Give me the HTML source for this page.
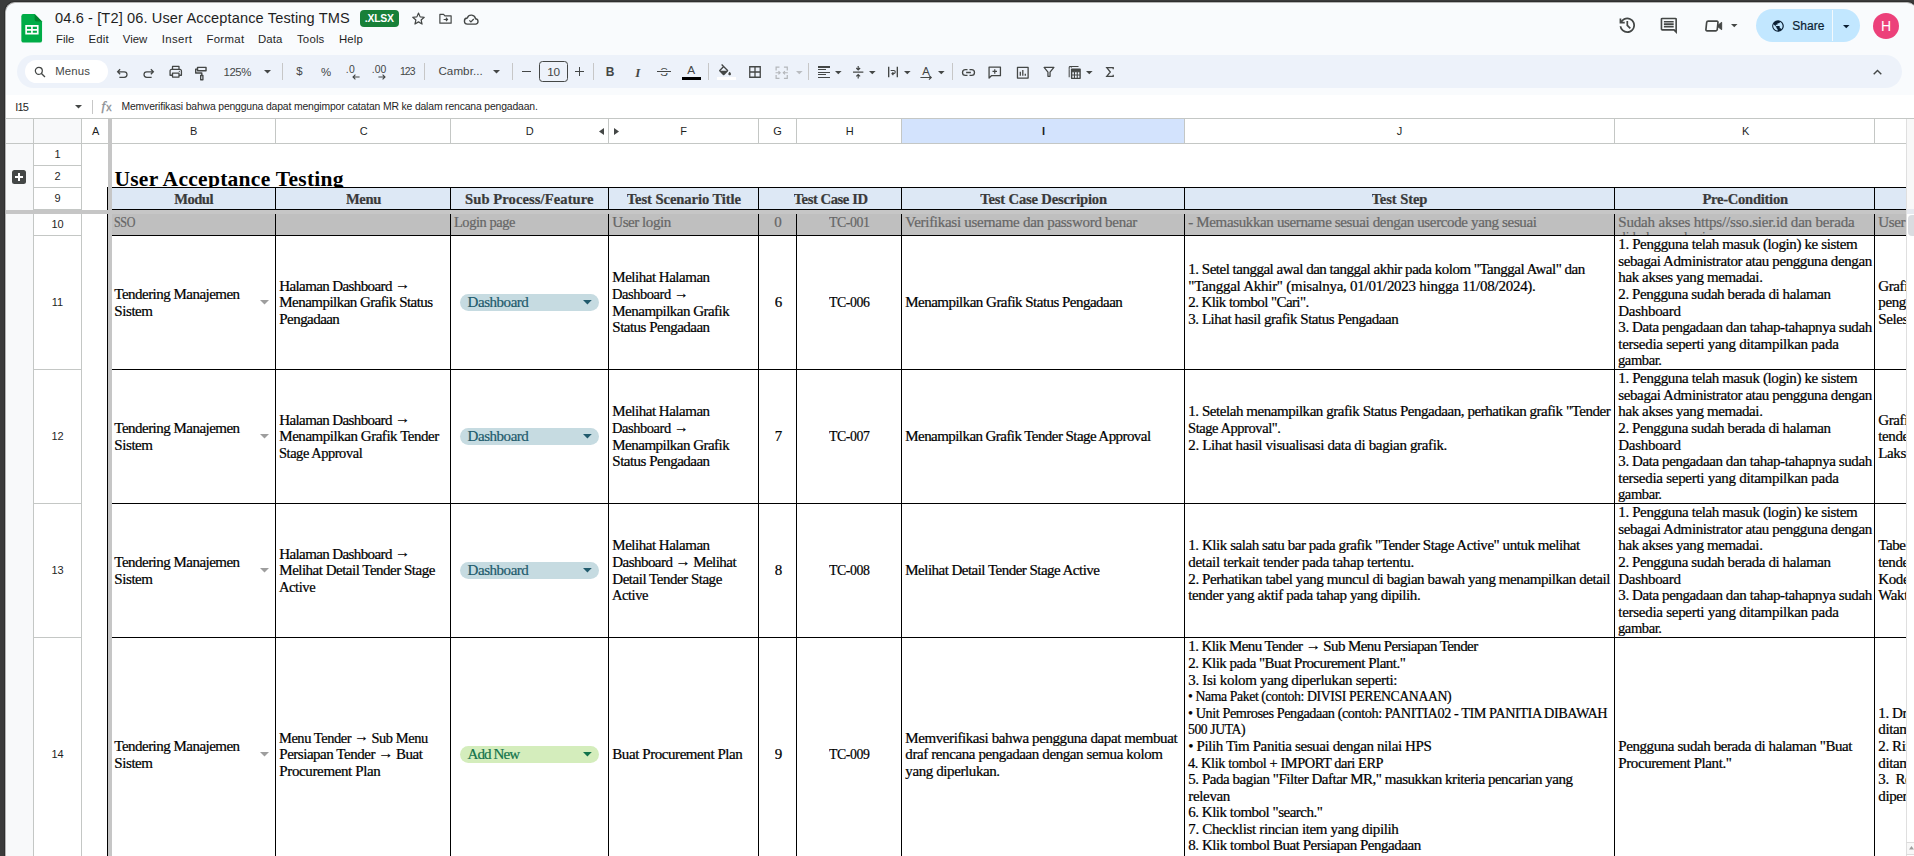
<!DOCTYPE html>
<html><head><meta charset="utf-8"><title>sheet</title>
<style>
*{box-sizing:border-box;margin:0;padding:0}
html,body{width:1914px;height:856px;overflow:hidden;background:#3b3b3b;font-family:"Liberation Sans",sans-serif}
#app{position:absolute;left:5px;top:2px;width:1912px;height:854px;background:#f9fbfd;border-radius:10px 10px 0 0;overflow:hidden;border-left:1px solid #b4b4b4;border-top:1px solid #b4b4b4;box-shadow:0 0 0 1px #2f2f2f}
#pg{position:absolute;left:-6px;top:-3px;width:1914px;height:856px}
.a{position:absolute}
.t{position:absolute;white-space:nowrap}
svg{position:absolute;overflow:visible}
.cell{position:absolute;display:flex;flex-direction:column;justify-content:center;font-family:"Liberation Serif",serif;font-size:15px;line-height:16.6px;color:#000;overflow:hidden;white-space:nowrap;letter-spacing:-0.4px;-webkit-text-stroke:0.22px}
.cell div{white-space:nowrap}
.cell.c{align-items:center}
.ar{position:relative;top:-1.3px}
</style></head><body>
<div id="app"><div id="pg">

<svg style="left:21.3px;top:14.1px" width="21.4" height="28.6" viewBox="0 0 21 29">
 <path d="M2.2 0H13.5L21 7.5V26.8Q21 29 18.8 29H2.2Q0 29 0 26.8V2.2Q0 0 2.2 0Z" fill="#00ac47"/>
 <path d="M13.5 0L21 7.5H15.5Q13.5 7.5 13.5 5.5Z" fill="#00832d"/>
 <path d="M4 11.2H17.5V20.8H4Z M5.7 12.9V15.1H9.9V12.9Z M11.6 12.9V15.1H15.8V12.9Z M5.7 16.9V19.1H9.9V16.9Z M11.6 16.9V19.1H15.8V16.9Z" fill="#fff" fill-rule="evenodd"/>
</svg>
<div class="t" style="left:55.00px;top:8.74px;font:14.6px/19px 'Liberation Sans',sans-serif;color:#1f1f1f;letter-spacing:0.117px;">04.6 - [T2] 06. User Acceptance Testing TMS</div>
<div class="a" style="left:360px;top:10px;width:39px;height:16.8px;background:#188038;border-radius:4px"></div>
<div class="t" style="left:364.70px;top:11.90px;font:bold 10.4px/14px 'Liberation Sans',sans-serif;color:#fff;letter-spacing:-0.171px;">.XLSX</div>
<svg style="left:411.30px;top:10.90px;" width="15" height="15" viewBox="0 0 24 24"><path d="M12 3.3l2.6 6.1 6.6.6-5 4.4 1.5 6.5L12 17.4 6.3 20.9l1.5-6.5-5-4.4 6.6-.6z" fill="none" stroke="#444746" stroke-width="1.9" stroke-linejoin="round"/></svg>
<svg style="left:437.50px;top:11.30px;" width="15" height="15" viewBox="0 0 24 24"><path d="M3 5.5h6l2 2.2h10v11.8H3z" fill="none" stroke="#444746" stroke-width="1.9" stroke-linejoin="round"/><path d="M9 13.5h6M12.6 10.8l2.7 2.7-2.7 2.7" fill="none" stroke="#444746" stroke-width="1.8"/></svg>
<svg style="left:462.90px;top:10.50px;" width="17" height="17" viewBox="0 0 24 24"><path d="M6.5 18.5a4.3 4.3 0 0 1-.4-8.6 6 6 0 0 1 11.6 1.1 3.8 3.8 0 0 1 .5 7.5z" fill="none" stroke="#444746" stroke-width="1.9" stroke-linejoin="round"/><path d="M9 13.2l2.2 2.2 4-4" fill="none" stroke="#444746" stroke-width="1.8"/></svg>
<div class="t" style="left:56.00px;top:32.05px;font:11.4px/15px 'Liberation Sans',sans-serif;color:#1f1f1f;letter-spacing:-0.018px;">File</div>
<div class="t" style="left:88.50px;top:32.05px;font:11.4px/15px 'Liberation Sans',sans-serif;color:#1f1f1f;letter-spacing:0.214px;">Edit</div>
<div class="t" style="left:122.80px;top:32.05px;font:11.4px/15px 'Liberation Sans',sans-serif;color:#1f1f1f;letter-spacing:-0.001px;">View</div>
<div class="t" style="left:161.80px;top:32.05px;font:11.4px/15px 'Liberation Sans',sans-serif;color:#1f1f1f;letter-spacing:0.331px;">Insert</div>
<div class="t" style="left:206.40px;top:32.05px;font:11.4px/15px 'Liberation Sans',sans-serif;color:#1f1f1f;letter-spacing:0.316px;">Format</div>
<div class="t" style="left:258.00px;top:32.05px;font:11.4px/15px 'Liberation Sans',sans-serif;color:#1f1f1f;letter-spacing:0.105px;">Data</div>
<div class="t" style="left:297.00px;top:32.05px;font:11.4px/15px 'Liberation Sans',sans-serif;color:#1f1f1f;letter-spacing:0.177px;">Tools</div>
<div class="t" style="left:339.00px;top:32.05px;font:11.4px/15px 'Liberation Sans',sans-serif;color:#1f1f1f;letter-spacing:0.138px;">Help</div>
<svg style="left:1616.60px;top:15.30px;" width="20.6" height="20.6" viewBox="0 -960 960 960"><path d="M480-120q-138 0-240.500-91.500T122-440h82q14 104 92.500 172T480-200q117 0 198.500-81.500T760-480q0-117-81.500-198.500T480-760q-69 0-129 32t-101 88h110v80H120v-240h80v94q51-64 124.500-99T480-840q75 0 140.500 28.500t114 77q48.500 48.500 77 114T840-480q0 75-28.500 140.500t-77 114q-48.500 48.500-114 77T480-120Zm112-192L440-464v-216h80v184l128 128-56 56Z" fill="#444746"/></svg>
<svg style="left:1658.80px;top:16.00px;" width="19.6" height="19.6" viewBox="0 -960 960 960"><path d="M240-400h480v-80H240v80Zm0-120h480v-80H240v80Zm0-120h480v-80H240v80ZM880-80 720-240H160q-33 0-56.500-23.500T80-320v-480q0-33 23.500-56.500T160-880h640q33 0 56.500 23.500T880-800v720ZM160-320h594l46 45v-525H160v480Zm0 0v-480 480Z" fill="#444746"/></svg>
<svg style="left:1704.40px;top:16.20px;" width="20" height="20" viewBox="0 0 24 24"><path d="M4.2 6.2h10.4a1.6 1.6 0 0 1 1.6 1.6v8.4a1.6 1.6 0 0 1-1.6 1.6H4.2a1.6 1.6 0 0 1-1.6-1.6V7.8a1.6 1.6 0 0 1 1.6-1.6z" fill="none" stroke="#444746" stroke-width="2" transform="skewX(-6) translate(1.4 0)"/><path d="M16.6 11.2l4.6-3.6v8.8l-4.6-3.6z" fill="#444746" stroke="#444746" stroke-width="1.2" stroke-linejoin="round"/></svg>
<svg style="left:1731.05px;top:23.95px" width="6.5" height="3.3" viewBox="0 0 10 5"><path d="M0 0H10L5 5Z" fill="#444746"/></svg>
<div class="a" style="left:1756px;top:9px;width:104px;height:33px;border-radius:17px;background:#c2e7ff"></div>
<div class="a" style="left:1831.8px;top:10px;width:1px;height:31px;background:#f3f9fd;"></div>
<svg style="left:1771.00px;top:19.00px;" width="14" height="14" viewBox="0 0 24 24"><circle cx="12" cy="12" r="10" fill="#0b1f33"/><path d="M4.3 9.2l5 4.3v2.1l2 1.9v2.6a8.2 8.2 0 0 1-7-10.9zM17.9 17.4c-.3-.8-1-1.4-1.9-1.4h-1v-3a1 1 0 0 0-1-1H8.2v-2h2a1 1 0 0 0 1-1V7.1h2a2 2 0 0 0 2-2v-.4a8.2 8.2 0 0 1 2.7 12.7z" fill="#c2e7ff"/></svg>
<div class="t" style="left:1792.30px;top:18.34px;font:12px/16px 'Liberation Sans',sans-serif;color:#0b1f33;letter-spacing:0.055px;-webkit-text-stroke:0.2px #0b1f33;">Share</div>
<svg style="left:1842.75px;top:24.65px" width="6.5" height="3.3" viewBox="0 0 10 5"><path d="M0 0H10L5 5Z" fill="#0b1f33"/></svg>
<div class="a" style="left:1873px;top:13px;width:26px;height:26px;border-radius:13px;background:#ec407a"></div>
<div class="t" style="left:1880.94px;top:17.35px;font:14px/18px 'Liberation Sans',sans-serif;color:#fff;">H</div>
<div class="a" style="left:17px;top:55px;width:1885px;height:33px;border-radius:16.5px;background:#edf2fa"></div>
<div class="a" style="left:25px;top:60px;width:83px;height:23px;border-radius:11.5px;background:#fff"></div>
<svg style="left:32.70px;top:64.60px;" width="14" height="14" viewBox="0 0 24 24"><circle cx="10" cy="10" r="6" fill="none" stroke="#444746" stroke-width="2.1"/><path d="M14.5 14.5l6 6" stroke="#444746" stroke-width="2.3"/></svg>
<div class="t" style="left:55.20px;top:64.05px;font:11.4px/15px 'Liberation Sans',sans-serif;color:#444746;letter-spacing:0.156px;">Menus</div>
<svg style="left:114.50px;top:65.60px;" width="15" height="15" viewBox="0 0 24 24"><path d="M8.2 5.2L4.2 9.2l4 4M4.6 9.2h10.2a4.4 4.4 0 0 1 0 8.8H7" fill="none" stroke="#444746" stroke-width="2"/></svg>
<svg style="left:140.80px;top:65.60px;" width="15" height="15" viewBox="0 0 24 24"><path d="M15.8 5.2l4 4-4 4M19.4 9.2H9.2a4.4 4.4 0 0 0 0 8.8H17" fill="none" stroke="#444746" stroke-width="2"/></svg>
<svg style="left:167.55px;top:64.25px;" width="15.5" height="15.5" viewBox="0 0 24 24"><path d="M7 8.4V3.8h10v4.6M7 17.4H3.2v-6.8a2.2 2.2 0 0 1 2.2-2.2h13.2a2.2 2.2 0 0 1 2.2 2.2v6.8H17" fill="none" stroke="#444746" stroke-width="2" stroke-linejoin="round"/><path d="M7 14h10v6.2H7z" fill="none" stroke="#444746" stroke-width="2" stroke-linejoin="round"/><circle cx="17.6" cy="11.4" r="1" fill="#444746"/></svg>
<svg style="left:193.10px;top:64.50px;" width="17" height="17" viewBox="0 0 24 24"><path d="M6.4 3.4h12v4.8h-12z" fill="none" stroke="#444746" stroke-width="2" stroke-linejoin="round"/><path d="M6.4 5.8H3.8v5.6h8.6v3.4" fill="none" stroke="#444746" stroke-width="2" stroke-linejoin="round"/><path d="M10.8 14.8h3.2v6h-3.2z" fill="none" stroke="#444746" stroke-width="1.9" stroke-linejoin="round"/></svg>
<div class="t" style="left:223.50px;top:64.75px;font:11.4px/15px 'Liberation Sans',sans-serif;color:#444746;letter-spacing:-0.414px;">125%</div>
<svg style="left:264.30px;top:70.20px" width="7" height="3.6" viewBox="0 0 10 5"><path d="M0 0H10L5 5Z" fill="#444746"/></svg>
<div class="a" style="left:282px;top:63px;width:1px;height:17px;background:#c7c7c7;"></div>
<div class="t" style="left:296.23px;top:63.55px;font:11.4px/15px 'Liberation Sans',sans-serif;color:#444746;">$</div>
<div class="t" style="left:321.03px;top:64.55px;font:11.4px/15px 'Liberation Sans',sans-serif;color:#444746;">%</div>
<div class="t" style="left:345.80px;top:62.90px;font:10.4px/14px 'Liberation Sans',sans-serif;color:#444746;letter-spacing:0.413px;">.0</div>
<svg style="left:352px;top:73.6px" width="8" height="6" viewBox="0 0 8 6"><path d="M7.6 3H1.2M3.4 .6L1 3l2.4 2.4" fill="none" stroke="#444746" stroke-width="1.1"/></svg>
<div class="t" style="left:371.80px;top:62.90px;font:10.4px/14px 'Liberation Sans',sans-serif;color:#444746;letter-spacing:0.014px;">.00</div>
<svg style="left:378px;top:73.6px" width="8" height="6" viewBox="0 0 8 6"><path d="M.4 3h6.4M4.6 .6L7 3 4.6 5.4" fill="none" stroke="#444746" stroke-width="1.1"/></svg>
<div class="t" style="left:400.00px;top:65.20px;font:10.4px/14px 'Liberation Sans',sans-serif;color:#444746;letter-spacing:-0.918px;">123</div>
<div class="a" style="left:424px;top:63px;width:1px;height:17px;background:#c7c7c7;"></div>
<div class="t" style="left:438.40px;top:62.88px;font:11.6px/15px 'Liberation Sans',sans-serif;color:#444746;letter-spacing:0.083px;">Cambr...</div>
<svg style="left:493.30px;top:70.20px" width="7" height="3.6" viewBox="0 0 10 5"><path d="M0 0H10L5 5Z" fill="#444746"/></svg>
<div class="a" style="left:512px;top:63px;width:1px;height:17px;background:#c7c7c7;"></div>
<div class="a" style="left:521.6px;top:70.5px;width:9.6px;height:1.2px;background:#444746;"></div>
<div class="a" style="left:539px;top:61px;width:29px;height:21px;border:1px solid #444746;border-radius:3.5px"></div>
<div class="t" style="left:547.25px;top:65.01px;font:11.8px/15px 'Liberation Sans',sans-serif;color:#444746;letter-spacing:-0.313px;">10</div>
<div class="a" style="left:574.6px;top:70.8px;width:9.6px;height:1.2px;background:#444746;"></div>
<div class="a" style="left:578.8px;top:66.6px;width:1.2px;height:9.6px;background:#444746;"></div>
<div class="a" style="left:593px;top:63px;width:1px;height:17px;background:#c7c7c7;"></div>
<div class="t" style="left:605.87px;top:64.24px;font:bold 12px/16px 'Liberation Sans',sans-serif;color:#444746;">B</div>
<div class="t" style="left:635.27px;top:63.51px;font:italic bold 13px/17px 'Liberation Serif',serif;color:#444746;">I</div>
<div class="t" style="left:660.26px;top:64.92px;font:11.5px/15px 'Liberation Sans',sans-serif;color:#444746;">S</div>
<div class="a" style="left:657.3px;top:71px;width:13.6px;height:1.3px;background:#444746;"></div>
<div class="a" style="left:658px;top:70px;width:12px;height:1px;background:#edf2fa;"></div>
<div class="a" style="left:658px;top:72.3px;width:12px;height:1px;background:#edf2fa;"></div>
<div class="t" style="left:687.36px;top:63.01px;font:11.8px/15px 'Liberation Sans',sans-serif;color:#444746;">A</div>
<div class="a" style="left:682px;top:77px;width:19px;height:3px;background:#000;"></div>
<div class="a" style="left:708px;top:63px;width:1px;height:17px;background:#c7c7c7;"></div>
<svg style="left:717.3px;top:63.6px" width="16" height="16" viewBox="0 0 24 24"><path d="M16.56 8.94L7.62 0 6.21 1.41l2.38 2.38-5.15 5.15c-.59.59-.59 1.54 0 2.12l5.5 5.5c.29.29.68.44 1.06.44s.77-.15 1.06-.44l5.5-5.5c.59-.58.59-1.53 0-2.12zM5.21 10L10 5.21 14.79 10H5.21zM19 11.5s-2 2.170-2 3.500c0 1.100.9 2 2 2s2-.9 2-2c0-1.330-2-3.500-2-3.500z" fill="#444746"/></svg>
<div class="a" style="left:717px;top:77px;width:19px;height:3px;background:#fff;"></div>
<svg style="left:748.70px;top:66.30px;" width="12" height="12" viewBox="0 0 24 24"><path d="M1.5 1.5h21v21h-21zM12 1.5v21M1.5 12h21" fill="none" stroke="#444746" stroke-width="2.6"/></svg>
<svg style="left:775.30px;top:65.50px;" width="13.4" height="13.4" viewBox="0 0 24 24"><path d="M8 2H2v6M16 2h6v6M8 22H2v-6M16 22h6v-6" fill="none" stroke="#b4b7bb" stroke-width="2.2"/><path d="M1 12h8M6.2 9l3 3-3 3M23 12h-8M17.8 9l-3 3 3 3" fill="none" stroke="#b4b7bb" stroke-width="2"/></svg>
<svg style="left:796.30px;top:70.70px" width="6.6" height="3.4" viewBox="0 0 10 5"><path d="M0 0H10L5 5Z" fill="#b9bcc0"/></svg>
<div class="a" style="left:808px;top:63px;width:1px;height:17px;background:#c7c7c7;"></div>
<div class="a" style="left:817.8px;top:66.4px;width:12px;height:1.35px;background:#444746;"></div>
<div class="a" style="left:817.8px;top:68.95px;width:8.4px;height:1.35px;background:#444746;"></div>
<div class="a" style="left:817.8px;top:71.5px;width:12px;height:1.35px;background:#444746;"></div>
<div class="a" style="left:817.8px;top:74.05000000000001px;width:8.4px;height:1.35px;background:#444746;"></div>
<div class="a" style="left:817.8px;top:76.60000000000001px;width:12px;height:1.35px;background:#444746;"></div>
<svg style="left:835.20px;top:70.70px" width="6.6" height="3.4" viewBox="0 0 10 5"><path d="M0 0H10L5 5Z" fill="#444746"/></svg>
<svg style="left:850.60px;top:65.10px;" width="14.4" height="14.4" viewBox="0 0 24 24"><path d="M3.4 12h17.2" stroke="#444746" stroke-width="2.2"/><path d="M12 1.6v6.2M8.8 5l3.2 3.2L15.2 5M12 22.4v-6.2M8.8 19l3.2-3.2 3.2 3.2" fill="none" stroke="#444746" stroke-width="2"/></svg>
<svg style="left:869.30px;top:70.70px" width="6.6" height="3.4" viewBox="0 0 10 5"><path d="M0 0H10L5 5Z" fill="#444746"/></svg>
<svg style="left:885.50px;top:65.30px;" width="14" height="14" viewBox="0 0 24 24"><path d="M4.6 3v18M19.4 3v18" stroke="#444746" stroke-width="2.3"/><path d="M8 9.4h5.2a2.7 2.7 0 0 1 0 5.4h-2.4M12.6 12.4l-2.4 2.4 2.4 2.4" fill="none" stroke="#444746" stroke-width="1.9"/></svg>
<svg style="left:903.60px;top:70.70px" width="6.6" height="3.4" viewBox="0 0 10 5"><path d="M0 0H10L5 5Z" fill="#444746"/></svg>
<div class="t" style="left:922.36px;top:63.72px;font:11.2px/15px 'Liberation Sans',sans-serif;color:#444746;">A</div>
<svg style="left:920px;top:74.6px" width="13" height="5" viewBox="0 0 13 5"><path d="M.4 2.5h10.6M9 .4l2.2 2.1L9 4.6" fill="none" stroke="#444746" stroke-width="1.2"/></svg>
<svg style="left:938.30px;top:70.70px" width="6.6" height="3.4" viewBox="0 0 10 5"><path d="M0 0H10L5 5Z" fill="#444746"/></svg>
<div class="a" style="left:952px;top:63px;width:1px;height:17px;background:#c7c7c7;"></div>
<svg style="left:960.90px;top:64.60px;" width="15" height="15" viewBox="0 0 24 24"><path d="M10.4 7.4H7a4.6 4.6 0 0 0 0 9.2h3.4M13.6 7.4H17a4.6 4.6 0 0 1 0 9.2h-3.4M8.2 12h7.6" fill="none" stroke="#444746" stroke-width="2.1"/></svg>
<svg style="left:987.45px;top:64.55px;" width="15.5" height="15.5" viewBox="0 0 24 24"><path d="M3.2 3.2h17.6v13.4H6.8l-3.6 3.6z" fill="none" stroke="#444746" stroke-width="2" stroke-linejoin="round"/><path d="M12 6.4v7M8.5 9.9h7" stroke="#444746" stroke-width="1.9"/></svg>
<svg style="left:1015.60px;top:65.50px;" width="13.6" height="13.6" viewBox="0 0 24 24"><path d="M2.6 2.6h18.8v18.8H2.6z" fill="none" stroke="#444746" stroke-width="2.3" stroke-linejoin="round"/><path d="M7.6 17.4V10M12 17.4V7M16.4 17.4v-3.6" stroke="#444746" stroke-width="2.3"/></svg>
<svg style="left:1041.90px;top:65.30px;" width="14" height="14" viewBox="0 0 24 24"><path d="M3.6 4.2h16.8l-6.6 8v7.2h-3.6v-7.2z" fill="none" stroke="#444746" stroke-width="2.2" stroke-linejoin="round"/></svg>
<svg style="left:1066.70px;top:64.70px;" width="15.4" height="15.4" viewBox="0 0 24 24"><path d="M6.6 4.2V2.4h11.2M3.4 6.6V19" fill="none" stroke="#444746" stroke-width="1.6"/><path d="M3.4 6.6V3.8a1.4 1.4 0 0 1 1.4-1.4h12.6" fill="none" stroke="#444746" stroke-width="1.6"/><path d="M7.2 6.4h13.2v14.4H7.2z" fill="none" stroke="#444746" stroke-width="2.2" stroke-linejoin="round"/><path d="M7.2 10.6h13.2M7.2 15.6h13.2M11.6 10.6v10.2M16 10.6v10.2" stroke="#444746" stroke-width="1.7"/><path d="M7.2 6.4h13.2v4.2H7.2z" fill="#444746"/></svg>
<svg style="left:1085.50px;top:70.70px" width="6.6" height="3.4" viewBox="0 0 10 5"><path d="M0 0H10L5 5Z" fill="#444746"/></svg>
<svg style="left:1104.30px;top:66.30px;" width="12" height="12" viewBox="0 0 24 24"><path d="M18.4 6.4V3.4H5.6l7 8.6-7 8.6h12.8v-3" fill="none" stroke="#444746" stroke-width="2.6" stroke-linejoin="miter"/></svg>
<svg style="left:1873px;top:69px" width="9" height="6" viewBox="0 0 9 6"><path d="M.7 5.2l3.8-3.8 3.8 3.8" fill="none" stroke="#444746" stroke-width="1.4"/></svg>
<div class="a" style="left:5px;top:95px;width:1909px;height:24px;background:#fff;"></div>
<div class="t" style="left:15.20px;top:99.79px;font:11px/14px 'Liberation Sans',sans-serif;color:#1f1f1f;letter-spacing:-0.831px;">I15</div>
<svg style="left:74.70px;top:104.80px" width="7" height="3.6" viewBox="0 0 10 5"><path d="M0 0H10L5 5Z" fill="#444746"/></svg>
<div class="a" style="left:92px;top:100px;width:1px;height:14px;background:#c7c7c7;"></div>
<div class="t" style="left:101.60px;top:96.74px;font:italic 13.5px/18px 'Liberation Serif',serif;color:#8a8e93;-webkit-text-stroke:0.3px #8a8e93;">f</div>
<div class="t" style="left:106.20px;top:100.36px;font:10.5px/14px 'Liberation Sans',sans-serif;color:#8a8e93;-webkit-text-stroke:0.3px #8a8e93;">x</div>
<div class="t" style="left:121.50px;top:100.30px;font:10.4px/14px 'Liberation Sans',sans-serif;color:#1f1f1f;letter-spacing:-0.157px;">Memverifikasi bahwa pengguna dapat mengimpor catatan MR ke dalam rencana pengadaan.</div>
<div class="a" style="left:5px;top:118px;width:1909px;height:738px;background:#fff;"></div>
<div class="a" style="left:5px;top:119px;width:28px;height:737px;background:#f8f9fa;"></div>
<div class="a" style="left:34px;top:119px;width:47px;height:24px;background:#f8f9fa;"></div>
<div class="a" style="left:5px;top:118px;width:1901px;height:1px;background:#c4c7c5;"></div>
<div class="a" style="left:5px;top:143px;width:1901px;height:1px;background:#c4c7c5;"></div>
<div class="a" style="left:33px;top:119px;width:1px;height:737px;background:#c4c7c5;"></div>
<div class="a" style="left:81px;top:119px;width:1px;height:737px;background:#c4c7c5;"></div>
<div class="a" style="left:902px;top:119px;width:282px;height:24px;background:#d3e3fd;"></div>
<div class="a" style="left:275px;top:119px;width:1px;height:24px;background:#c4c7c5;"></div>
<div class="a" style="left:450px;top:119px;width:1px;height:24px;background:#c4c7c5;"></div>
<div class="a" style="left:608px;top:119px;width:1px;height:24px;background:#c4c7c5;"></div>
<div class="a" style="left:758px;top:119px;width:1px;height:24px;background:#c4c7c5;"></div>
<div class="a" style="left:796px;top:119px;width:1px;height:24px;background:#c4c7c5;"></div>
<div class="a" style="left:901px;top:119px;width:1px;height:24px;background:#c4c7c5;"></div>
<div class="a" style="left:1184px;top:119px;width:1px;height:24px;background:#c4c7c5;"></div>
<div class="a" style="left:1614px;top:119px;width:1px;height:24px;background:#c4c7c5;"></div>
<div class="a" style="left:1874px;top:119px;width:1px;height:24px;background:#c4c7c5;"></div>
<div class="t" style="left:91.93px;top:124.39px;font:11px/14px 'Liberation Sans',sans-serif;color:#1f1f1f;">A</div>
<div class="t" style="left:189.93px;top:124.39px;font:11px/14px 'Liberation Sans',sans-serif;color:#1f1f1f;">B</div>
<div class="t" style="left:359.63px;top:124.39px;font:11px/14px 'Liberation Sans',sans-serif;color:#1f1f1f;">C</div>
<div class="t" style="left:525.63px;top:124.39px;font:11px/14px 'Liberation Sans',sans-serif;color:#1f1f1f;">D</div>
<div class="t" style="left:680.24px;top:124.39px;font:11px/14px 'Liberation Sans',sans-serif;color:#1f1f1f;">F</div>
<div class="t" style="left:773.32px;top:124.39px;font:11px/14px 'Liberation Sans',sans-serif;color:#1f1f1f;">G</div>
<div class="t" style="left:845.63px;top:124.39px;font:11px/14px 'Liberation Sans',sans-serif;color:#1f1f1f;">H</div>
<div class="t" style="left:1042.07px;top:124.39px;font:bold 11px/14px 'Liberation Sans',sans-serif;color:#1f1f1f;">I</div>
<div class="t" style="left:1396.85px;top:124.39px;font:11px/14px 'Liberation Sans',sans-serif;color:#1f1f1f;">J</div>
<div class="t" style="left:1741.93px;top:124.39px;font:11px/14px 'Liberation Sans',sans-serif;color:#1f1f1f;">K</div>
<svg style="left:598.5px;top:127.6px" width="5" height="7" viewBox="0 0 5 7"><path d="M5 0V7L0 3.5Z" fill="#444746"/></svg>
<svg style="left:613.5px;top:127.6px" width="5" height="7" viewBox="0 0 5 7"><path d="M0 0V7L5 3.5Z" fill="#444746"/></svg>
<div class="a" style="left:34px;top:165px;width:47px;height:1px;background:#c4c7c5;"></div>
<div class="t" style="left:54.44px;top:146.89px;font:11px/14px 'Liberation Sans',sans-serif;color:#1f1f1f;">1</div>
<div class="a" style="left:34px;top:187px;width:47px;height:1px;background:#c4c7c5;"></div>
<div class="t" style="left:54.44px;top:168.89px;font:11px/14px 'Liberation Sans',sans-serif;color:#1f1f1f;">2</div>
<div class="a" style="left:34px;top:209px;width:47px;height:1px;background:#c4c7c5;"></div>
<div class="t" style="left:54.44px;top:190.89px;font:11px/14px 'Liberation Sans',sans-serif;color:#1f1f1f;">9</div>
<div class="a" style="left:34px;top:235px;width:47px;height:1px;background:#c4c7c5;"></div>
<div class="t" style="left:51.38px;top:216.89px;font:11px/14px 'Liberation Sans',sans-serif;color:#1f1f1f;">10</div>
<div class="a" style="left:34px;top:369px;width:47px;height:1px;background:#c4c7c5;"></div>
<div class="t" style="left:51.79px;top:294.89px;font:11px/14px 'Liberation Sans',sans-serif;color:#1f1f1f;">11</div>
<div class="a" style="left:34px;top:503px;width:47px;height:1px;background:#c4c7c5;"></div>
<div class="t" style="left:51.38px;top:428.89px;font:11px/14px 'Liberation Sans',sans-serif;color:#1f1f1f;">12</div>
<div class="a" style="left:34px;top:637px;width:47px;height:1px;background:#c4c7c5;"></div>
<div class="t" style="left:51.38px;top:562.89px;font:11px/14px 'Liberation Sans',sans-serif;color:#1f1f1f;">13</div>
<div class="a" style="left:34px;top:871px;width:47px;height:1px;background:#c4c7c5;"></div>
<div class="t" style="left:51.38px;top:746.89px;font:11px/14px 'Liberation Sans',sans-serif;color:#1f1f1f;">14</div>
<div class="a" style="left:12px;top:170px;width:14px;height:14px;border-radius:2.5px;background:#444746"></div>
<div class="a" style="left:15px;top:176.4px;width:8px;height:1.2px;background:#fff;"></div>
<div class="a" style="left:18.4px;top:173px;width:1.2px;height:8px;background:#fff;"></div>
<div class="a" style="left:112px;top:160px;width:400px;height:27px;overflow:hidden"><div class="t" style="left:2.4px;top:4px;font:bold 21.5px/30px 'Liberation Serif',serif;color:#000;letter-spacing:0.285px">User Acceptance Testing</div></div>
<div class="a" style="left:108px;top:188px;width:1798px;height:21px;background:#dde8f5;"></div>
<div class="a" style="left:108px;top:214px;width:1798px;height:21px;background:#bfbfbf;"></div>
<div class="a" style="left:107px;top:187px;width:1799px;height:1px;background:#000;"></div>
<div class="a" style="left:107px;top:209px;width:1799px;height:1px;background:#000;"></div>
<div class="a" style="left:107px;top:235px;width:1799px;height:1px;background:#000;"></div>
<div class="a" style="left:107px;top:369px;width:1799px;height:1px;background:#000;"></div>
<div class="a" style="left:107px;top:503px;width:1799px;height:1px;background:#000;"></div>
<div class="a" style="left:107px;top:637px;width:1799px;height:1px;background:#000;"></div>
<div class="a" style="left:107px;top:187px;width:1px;height:23px;background:#000;"></div>
<div class="a" style="left:107px;top:214px;width:1px;height:642px;background:#000;"></div>
<div class="a" style="left:275px;top:187px;width:1px;height:23px;background:#000;"></div>
<div class="a" style="left:275px;top:214px;width:1px;height:642px;background:#000;"></div>
<div class="a" style="left:450px;top:187px;width:1px;height:23px;background:#000;"></div>
<div class="a" style="left:450px;top:214px;width:1px;height:642px;background:#000;"></div>
<div class="a" style="left:608px;top:187px;width:1px;height:23px;background:#000;"></div>
<div class="a" style="left:608px;top:214px;width:1px;height:642px;background:#000;"></div>
<div class="a" style="left:758px;top:187px;width:1px;height:23px;background:#000;"></div>
<div class="a" style="left:758px;top:214px;width:1px;height:642px;background:#000;"></div>
<div class="a" style="left:796px;top:214px;width:1px;height:642px;background:#000;"></div>
<div class="a" style="left:901px;top:187px;width:1px;height:23px;background:#000;"></div>
<div class="a" style="left:901px;top:214px;width:1px;height:642px;background:#000;"></div>
<div class="a" style="left:1184px;top:187px;width:1px;height:23px;background:#000;"></div>
<div class="a" style="left:1184px;top:214px;width:1px;height:642px;background:#000;"></div>
<div class="a" style="left:1614px;top:187px;width:1px;height:23px;background:#000;"></div>
<div class="a" style="left:1614px;top:214px;width:1px;height:642px;background:#000;"></div>
<div class="a" style="left:1874px;top:187px;width:1px;height:23px;background:#000;"></div>
<div class="a" style="left:1874px;top:214px;width:1px;height:642px;background:#000;"></div>
<div class="a" style="left:108px;top:119px;width:4px;height:737px;background:#c6c6c6;"></div>
<div class="a" style="left:5px;top:210px;width:1901px;height:4px;background:#c6c6c6;"></div>
<div class="cell" style="left:174.20px;top:188.3px;width:58.80000000000001px;height:21px;color:#3a3a3a;font-weight:bold;font-size:14.6px;letter-spacing:-0.515px"><div style="">Modul</div></div>
<div class="cell" style="left:345.90px;top:188.3px;width:55.10000000000002px;height:21px;color:#3a3a3a;font-weight:bold;font-size:14.6px;letter-spacing:-0.350px"><div style="">Menu</div></div>
<div class="cell" style="left:465.00px;top:188.3px;width:148.70000000000005px;height:21px;color:#3a3a3a;font-weight:bold;font-size:14.6px;letter-spacing:0.079px"><div style="">Sub Process/Feature</div></div>
<div class="cell" style="left:626.80px;top:188.3px;width:134.20000000000005px;height:21px;color:#3a3a3a;font-weight:bold;font-size:14.6px;letter-spacing:-0.080px"><div style="">Test Scenario Title</div></div>
<div class="cell" style="left:793.60px;top:188.3px;width:94.0px;height:21px;color:#3a3a3a;font-weight:bold;font-size:14.6px;letter-spacing:-0.413px"><div style="">Test Case ID</div></div>
<div class="cell" style="left:980.30px;top:188.3px;width:146.70000000000005px;height:21px;color:#3a3a3a;font-weight:bold;font-size:14.6px;letter-spacing:-0.167px"><div style="">Test Case Descripion</div></div>
<div class="cell" style="left:1371.50px;top:188.3px;width:75.90000000000009px;height:21px;color:#3a3a3a;font-weight:bold;font-size:14.6px;letter-spacing:-0.084px"><div style="">Test Step</div></div>
<div class="cell" style="left:1702.40px;top:188.3px;width:105.39999999999986px;height:21px;color:#3a3a3a;font-weight:bold;font-size:14.6px;letter-spacing:-0.274px"><div style="">Pre-Condition</div></div>
<div class="cell" style="left:111px;top:212px;width:164px;height:21px;padding:0 0px 0 3.3px;color:#666;"><div style="letter-spacing:-0.45px;transform:scaleX(0.8025);transform-origin:0 50%">SSO</div></div>
<div class="cell" style="left:451px;top:212px;width:157px;height:21px;padding:0 0px 0 3.3px;color:#666;"><div style="letter-spacing:-0.45px;transform:scaleX(0.9606);transform-origin:0 50%">Login page</div></div>
<div class="cell" style="left:609px;top:212px;width:149px;height:21px;padding:0 0px 0 3.3px;color:#666;"><div style="letter-spacing:-0.451px">User login</div></div>
<div class="cell" style="left:774.20px;top:212px;width:27px;height:21px;color:#666;font-size:15px;letter-spacing:-0.500px"><div style="">0</div></div>
<div class="cell" style="left:829.45px;top:212px;width:60.5px;height:21px;color:#666;font-size:15px;letter-spacing:-0.450px"><div style="transform:scaleX(0.9212);transform-origin:0 50%;">TC-001</div></div>
<div class="cell" style="left:902px;top:212px;width:282px;height:21px;padding:0 0px 0 3.3px;color:#666;"><div style="letter-spacing:-0.282px">Verifikasi username dan password benar</div></div>
<div class="cell" style="left:1185px;top:212px;width:429px;height:21px;padding:0 0px 0 3.3px;color:#666;"><div style="letter-spacing:-0.363px">- Memasukkan username sesuai dengan usercode yang sesuai</div></div>
<div class="cell" style="left:1615px;top:212px;width:259px;height:21px;padding:0 0px 0 3.3px;color:#666;"><div style="letter-spacing:-0.175px">Sudah akses htt<span>ps</span>//sso.sier.id dan berada</div></div>
<div class="cell" style="left:1875px;top:212px;width:31px;height:21px;padding:0 0px 0 3.3px;color:#666;"><div>User</div></div>
<div class="a" style="left:1615px;top:231px;width:259px;height:4px;overflow:hidden"><div class="t" style="left:3.3px;top:-2px;font:15px/16.6px 'Liberation Serif',serif;color:#666;letter-spacing:-0.4px">di halaman login</div></div>
<div class="cell" style="left:111px;top:236px;width:164px;height:133px;padding:0 0px 0 3.3px;color:#000;"><div style="letter-spacing:-0.518px">Tendering Manajemen</div><div style="letter-spacing:-0.423px">Sistem</div></div>
<svg style="left:259.50px;top:300.00px" width="9" height="4.6" viewBox="0 0 10 5"><path d="M0 0H10L5 5Z" fill="#9e9e9e"/></svg>
<div class="cell" style="left:276px;top:236px;width:174px;height:133px;padding:0 0px 0 3.3px;color:#000;"><div style="letter-spacing:-0.612px">Halaman Dashboard <span class="ar">→</span></div><div style="letter-spacing:-0.533px">Menampilkan Grafik Status</div><div style="letter-spacing:-0.552px">Pengadaan</div></div>
<div class="a" style="left:460px;top:294.0px;width:139px;height:16.8px;border-radius:8.4px;background:#c6dbe1"></div>
<div class="t" style="left:467.6px;top:293.7px;font:15px/17px 'Liberation Serif',serif;color:#215a6c;letter-spacing:-0.464px;-webkit-text-stroke:0.2px #215a6c">Dashboard</div>
<svg style="left:583.30px;top:300.20px" width="8.8" height="4.4" viewBox="0 0 10 5"><path d="M0 0H10L5 5Z" fill="#215a6c"/></svg>
<div class="cell" style="left:609px;top:236px;width:149px;height:133px;padding:0 0px 0 3.3px;color:#000;"><div style="letter-spacing:-0.483px">Melihat Halaman</div><div style="letter-spacing:-0.45px;transform:scaleX(0.9647);transform-origin:0 50%">Dashboard <span class="ar">→</span></div><div style="letter-spacing:-0.517px">Menampilkan Grafik</div><div style="letter-spacing:-0.506px">Status Pengadaan</div></div>
<div class="cell" style="left:774.70px;top:236px;width:27px;height:133px;color:#000;font-size:15px;letter-spacing:-0.500px"><div style="">6</div></div>
<div class="cell" style="left:829.45px;top:236px;width:60.5px;height:133px;color:#000;font-size:15px;letter-spacing:-0.450px"><div style="transform:scaleX(0.9212);transform-origin:0 50%;">TC-006</div></div>
<div class="cell" style="left:902px;top:236px;width:282px;height:133px;padding:0 0px 0 3.3px;color:#000;"><div style="letter-spacing:-0.524px">Menampilkan Grafik Status Pengadaan</div></div>
<div class="cell" style="left:1185px;top:236px;width:429px;height:133px;padding:0 0px 0 3.3px;color:#000;"><div style="letter-spacing:-0.494px">1. Setel tanggal awal dan tanggal akhir pada kolom "Tanggal Awal" dan</div><div style="letter-spacing:-0.255px">"Tanggal Akhir" (misalnya, 01/01/2023 hingga 11/08/2024).</div><div style="letter-spacing:-0.600px">2. Klik tombol "Cari".</div><div style="letter-spacing:-0.459px">3. Lihat hasil grafik Status Pengadaan</div><div> </div></div>
<div class="cell" style="left:1615px;top:236px;width:259px;height:133px;padding:0 0px 0 3.3px;color:#000;"><div style="letter-spacing:-0.379px">1. Pengguna telah masuk (login) ke sistem</div><div style="letter-spacing:-0.391px">sebagai Administrator atau pengguna dengan</div><div style="letter-spacing:-0.395px">hak akses yang memadai.</div><div style="letter-spacing:-0.411px">2. Pengguna sudah berada di halaman</div><div style="letter-spacing:-0.298px">Dashboard</div><div style="letter-spacing:-0.410px">3. Data pengadaan dan tahap-tahapnya sudah</div><div style="letter-spacing:-0.277px">tersedia seperti yang ditampilkan pada</div><div style="letter-spacing:-0.45px;transform:scaleX(0.9721);transform-origin:0 50%">gambar.</div></div>
<div class="cell" style="left:1875px;top:236px;width:31px;height:133px;padding:0 0px 0 3.3px;color:#000;"><div>Grafik status</div><div>pengadaan</div><div>Selesai</div></div>
<div class="cell" style="left:111px;top:370px;width:164px;height:133px;padding:0 0px 0 3.3px;color:#000;"><div style="letter-spacing:-0.518px">Tendering Manajemen</div><div style="letter-spacing:-0.423px">Sistem</div></div>
<svg style="left:259.50px;top:434.00px" width="9" height="4.6" viewBox="0 0 10 5"><path d="M0 0H10L5 5Z" fill="#9e9e9e"/></svg>
<div class="cell" style="left:276px;top:370px;width:174px;height:133px;padding:0 0px 0 3.3px;color:#000;"><div style="letter-spacing:-0.612px">Halaman Dashboard <span class="ar">→</span></div><div style="letter-spacing:-0.465px">Menampilkan Grafik Tender</div><div style="letter-spacing:-0.45px;transform:scaleX(0.9607);transform-origin:0 50%">Stage Approval</div></div>
<div class="a" style="left:460px;top:428.0px;width:139px;height:16.8px;border-radius:8.4px;background:#c6dbe1"></div>
<div class="t" style="left:467.6px;top:427.7px;font:15px/17px 'Liberation Serif',serif;color:#215a6c;letter-spacing:-0.464px;-webkit-text-stroke:0.2px #215a6c">Dashboard</div>
<svg style="left:583.30px;top:434.20px" width="8.8" height="4.4" viewBox="0 0 10 5"><path d="M0 0H10L5 5Z" fill="#215a6c"/></svg>
<div class="cell" style="left:609px;top:370px;width:149px;height:133px;padding:0 0px 0 3.3px;color:#000;"><div style="letter-spacing:-0.483px">Melihat Halaman</div><div style="letter-spacing:-0.45px;transform:scaleX(0.9647);transform-origin:0 50%">Dashboard <span class="ar">→</span></div><div style="letter-spacing:-0.517px">Menampilkan Grafik</div><div style="letter-spacing:-0.506px">Status Pengadaan</div></div>
<div class="cell" style="left:774.70px;top:370px;width:27px;height:133px;color:#000;font-size:15px;letter-spacing:-0.500px"><div style="">7</div></div>
<div class="cell" style="left:829.45px;top:370px;width:60.5px;height:133px;color:#000;font-size:15px;letter-spacing:-0.450px"><div style="transform:scaleX(0.9212);transform-origin:0 50%;">TC-007</div></div>
<div class="cell" style="left:902px;top:370px;width:282px;height:133px;padding:0 0px 0 3.3px;color:#000;"><div style="letter-spacing:-0.564px">Menampilkan Grafik Tender Stage Approval</div></div>
<div class="cell" style="left:1185px;top:370px;width:429px;height:133px;padding:0 0px 0 3.3px;color:#000;"><div style="letter-spacing:-0.451px">1. Setelah menampilkan grafik Status Pengadaan, perhatikan grafik "Tender</div><div style="letter-spacing:-0.45px;transform:scaleX(0.9668);transform-origin:0 50%">Stage Approval".</div><div style="letter-spacing:-0.357px">2. Lihat hasil visualisasi data di bagian grafik.</div><div> </div></div>
<div class="cell" style="left:1615px;top:370px;width:259px;height:133px;padding:0 0px 0 3.3px;color:#000;"><div style="letter-spacing:-0.379px">1. Pengguna telah masuk (login) ke sistem</div><div style="letter-spacing:-0.391px">sebagai Administrator atau pengguna dengan</div><div style="letter-spacing:-0.395px">hak akses yang memadai.</div><div style="letter-spacing:-0.411px">2. Pengguna sudah berada di halaman</div><div style="letter-spacing:-0.298px">Dashboard</div><div style="letter-spacing:-0.410px">3. Data pengadaan dan tahap-tahapnya sudah</div><div style="letter-spacing:-0.277px">tersedia seperti yang ditampilkan pada</div><div style="letter-spacing:-0.45px;transform:scaleX(0.9721);transform-origin:0 50%">gambar.</div></div>
<div class="cell" style="left:1875px;top:370px;width:31px;height:133px;padding:0 0px 0 3.3px;color:#000;"><div>Grafik</div><div>tender</div><div>Laksana</div></div>
<div class="cell" style="left:111px;top:504px;width:164px;height:133px;padding:0 0px 0 3.3px;color:#000;"><div style="letter-spacing:-0.518px">Tendering Manajemen</div><div style="letter-spacing:-0.423px">Sistem</div></div>
<svg style="left:259.50px;top:568.00px" width="9" height="4.6" viewBox="0 0 10 5"><path d="M0 0H10L5 5Z" fill="#9e9e9e"/></svg>
<div class="cell" style="left:276px;top:504px;width:174px;height:133px;padding:0 0px 0 3.3px;color:#000;"><div style="letter-spacing:-0.612px">Halaman Dashboard <span class="ar">→</span></div><div style="letter-spacing:-0.501px">Melihat Detail Tender Stage</div><div style="letter-spacing:-0.45px;transform:scaleX(0.9710);transform-origin:0 50%">Active</div></div>
<div class="a" style="left:460px;top:562.0px;width:139px;height:16.8px;border-radius:8.4px;background:#c6dbe1"></div>
<div class="t" style="left:467.6px;top:561.7px;font:15px/17px 'Liberation Serif',serif;color:#215a6c;letter-spacing:-0.464px;-webkit-text-stroke:0.2px #215a6c">Dashboard</div>
<svg style="left:583.30px;top:568.20px" width="8.8" height="4.4" viewBox="0 0 10 5"><path d="M0 0H10L5 5Z" fill="#215a6c"/></svg>
<div class="cell" style="left:609px;top:504px;width:149px;height:133px;padding:0 0px 0 3.3px;color:#000;"><div style="letter-spacing:-0.483px">Melihat Halaman</div><div style="letter-spacing:-0.549px">Dashboard <span class="ar">→</span> Melihat</div><div style="letter-spacing:-0.480px">Detail Tender Stage</div><div style="letter-spacing:-0.45px;transform:scaleX(0.9656);transform-origin:0 50%">Active</div></div>
<div class="cell" style="left:774.70px;top:504px;width:27px;height:133px;color:#000;font-size:15px;letter-spacing:-0.500px"><div style="">8</div></div>
<div class="cell" style="left:829.45px;top:504px;width:60.5px;height:133px;color:#000;font-size:15px;letter-spacing:-0.450px"><div style="transform:scaleX(0.9212);transform-origin:0 50%;">TC-008</div></div>
<div class="cell" style="left:902px;top:504px;width:282px;height:133px;padding:0 0px 0 3.3px;color:#000;"><div style="letter-spacing:-0.525px">Melihat Detail Tender Stage Active</div></div>
<div class="cell" style="left:1185px;top:504px;width:429px;height:133px;padding:0 0px 0 3.3px;color:#000;"><div style="letter-spacing:-0.448px">1. Klik salah satu bar pada grafik "Tender Stage Active" untuk melihat</div><div style="letter-spacing:-0.300px">detail terkait tender pada tahap tertentu.</div><div style="letter-spacing:-0.413px">2. Perhatikan tabel yang muncul di bagian bawah yang menampilkan detail</div><div style="letter-spacing:-0.417px">tender yang aktif pada tahap yang dipilih.</div></div>
<div class="cell" style="left:1615px;top:504px;width:259px;height:133px;padding:0 0px 0 3.3px;color:#000;"><div style="letter-spacing:-0.379px">1. Pengguna telah masuk (login) ke sistem</div><div style="letter-spacing:-0.391px">sebagai Administrator atau pengguna dengan</div><div style="letter-spacing:-0.395px">hak akses yang memadai.</div><div style="letter-spacing:-0.411px">2. Pengguna sudah berada di halaman</div><div style="letter-spacing:-0.298px">Dashboard</div><div style="letter-spacing:-0.410px">3. Data pengadaan dan tahap-tahapnya sudah</div><div style="letter-spacing:-0.277px">tersedia seperti yang ditampilkan pada</div><div style="letter-spacing:-0.45px;transform:scaleX(0.9721);transform-origin:0 50%">gambar.</div></div>
<div class="cell" style="left:1875px;top:504px;width:31px;height:133px;padding:0 0px 0 3.3px;color:#000;"><div>Tabel</div><div>tender</div><div>Kode</div><div>Waktu</div></div>
<div class="cell" style="left:111px;top:638px;width:164px;height:233px;padding:0 0px 0 3.3px;color:#000;"><div style="letter-spacing:-0.518px">Tendering Manajemen</div><div style="letter-spacing:-0.423px">Sistem</div></div>
<svg style="left:259.50px;top:752.00px" width="9" height="4.6" viewBox="0 0 10 5"><path d="M0 0H10L5 5Z" fill="#9e9e9e"/></svg>
<div class="cell" style="left:276px;top:638px;width:174px;height:233px;padding:0 0px 0 3.3px;color:#000;"><div style="letter-spacing:-0.45px;transform:scaleX(0.9619);transform-origin:0 50%">Menu Tender <span class="ar">→</span> Sub Menu</div><div style="letter-spacing:-0.476px">Persiapan Tender <span class="ar">→</span> Buat</div><div style="letter-spacing:-0.366px">Procurement Plan</div></div>
<div class="a" style="left:460px;top:746.0px;width:139px;height:16.8px;border-radius:8.4px;background:#d4edbc"></div>
<div class="t" style="left:467.6px;top:745.7px;font:15px/17px 'Liberation Serif',serif;color:#11734b;letter-spacing:-0.915px;-webkit-text-stroke:0.2px #11734b">Add New</div>
<svg style="left:583.30px;top:752.20px" width="8.8" height="4.4" viewBox="0 0 10 5"><path d="M0 0H10L5 5Z" fill="#11734b"/></svg>
<div class="cell" style="left:609px;top:638px;width:149px;height:233px;padding:0 0px 0 3.3px;color:#000;"><div style="letter-spacing:-0.430px">Buat Procurement Plan</div></div>
<div class="cell" style="left:774.70px;top:638px;width:27px;height:233px;color:#000;font-size:15px;letter-spacing:-0.500px"><div style="">9</div></div>
<div class="cell" style="left:829.45px;top:638px;width:60.5px;height:233px;color:#000;font-size:15px;letter-spacing:-0.450px"><div style="transform:scaleX(0.9212);transform-origin:0 50%;">TC-009</div></div>
<div class="cell" style="left:902px;top:638px;width:282px;height:233px;padding:0 0px 0 3.3px;color:#000;"><div style="letter-spacing:-0.409px">Memverifikasi bahwa pengguna dapat membuat</div><div style="letter-spacing:-0.398px">draf rencana pengadaan dengan semua kolom</div><div style="letter-spacing:-0.400px">yang diperlukan.</div></div>
<div class="cell" style="left:1185px;top:638px;width:429px;height:233px;padding:0 0px 0 3.3px;color:#000;"><div style="letter-spacing:-0.587px">1. Klik Menu Tender <span class="ar">→</span> Sub Menu Persiapan Tender</div><div style="letter-spacing:-0.521px">2. Klik pada "Buat Procurement Plant."</div><div style="letter-spacing:-0.321px">3. Isi kolom yang diperlukan seperti:</div><div style="letter-spacing:-0.45px;transform:scaleX(0.9192);transform-origin:0 50%">• Nama Paket (contoh: DIVISI PERENCANAAN)</div><div style="letter-spacing:-0.45px;transform:scaleX(0.9491);transform-origin:0 50%">• Unit Pemroses Pengadaan (contoh: PANITIA02 - TIM PANITIA DIBAWAH</div><div style="letter-spacing:-0.45px;transform:scaleX(0.9113);transform-origin:0 50%">500 JUTA)</div><div style="letter-spacing:-0.390px">• Pilih Tim Panitia sesuai dengan nilai HPS</div><div style="letter-spacing:-0.45px;transform:scaleX(0.9601);transform-origin:0 50%">4. Klik tombol + IMPORT dari ERP</div><div style="letter-spacing:-0.473px">5. Pada bagian "Filter Daftar MR," masukkan kriteria pencarian yang</div><div style="letter-spacing:-0.348px">relevan</div><div style="letter-spacing:-0.495px">6. Klik tombol "search."</div><div style="letter-spacing:-0.344px">7. Checklist rincian item yang dipilih</div><div style="letter-spacing:-0.471px">8. Klik tombol Buat Persiapan Pengadaan</div><div>9. Klik Simpan</div></div>
<div class="cell" style="left:1615px;top:638px;width:259px;height:233px;padding:0 0px 0 3.3px;color:#000;"><div style="letter-spacing:-0.421px">Pengguna sudah berada di halaman "Buat</div><div style="letter-spacing:-0.416px">Procurement Plant."</div></div>
<div class="cell" style="left:1875px;top:638px;width:31px;height:233px;padding:0 0px 0 3.3px;color:#000;"><div>1. Draf</div><div>ditampilkan</div><div>2. Rincian</div><div>ditampilkan</div><div>3.  Rencana</div><div>diperlukan</div></div>
<div class="a" style="left:1906px;top:119px;width:8px;height:737px;background:#fff;"></div>
<div class="a" style="left:1906px;top:119px;width:8px;height:90px;background:#f8f8f8;"></div>
<div class="a" style="left:1906px;top:209px;width:8px;height:5px;background:#e6e9ef;"></div>
<div class="a" style="left:1906px;top:119px;width:1px;height:737px;background:#dfdfdf;"></div>
<div class="a" style="left:1906px;top:118px;width:8px;height:1px;background:#c4c7c5;"></div>
<div class="a" style="left:1907.5px;top:214.5px;width:10px;height:21px;border-radius:4px;background:#dadce0"></div>
<div class="a" style="left:1907px;top:842px;width:7px;height:12px;background:#f8f8f8;"></div>
<div class="a" style="left:1906px;top:841.5px;width:8px;height:1px;background:#dcdcdc;"></div>
<div class="a" style="left:1906px;top:854px;width:8px;height:1px;background:#dcdcdc;"></div>
<svg style="left:1909px;top:845.6px" width="5" height="3.4" viewBox="0 0 5 3.4"><path d="M0 3.4H5L2.5 0Z" fill="#9e9e9e"/></svg>
</div></div></body></html>
